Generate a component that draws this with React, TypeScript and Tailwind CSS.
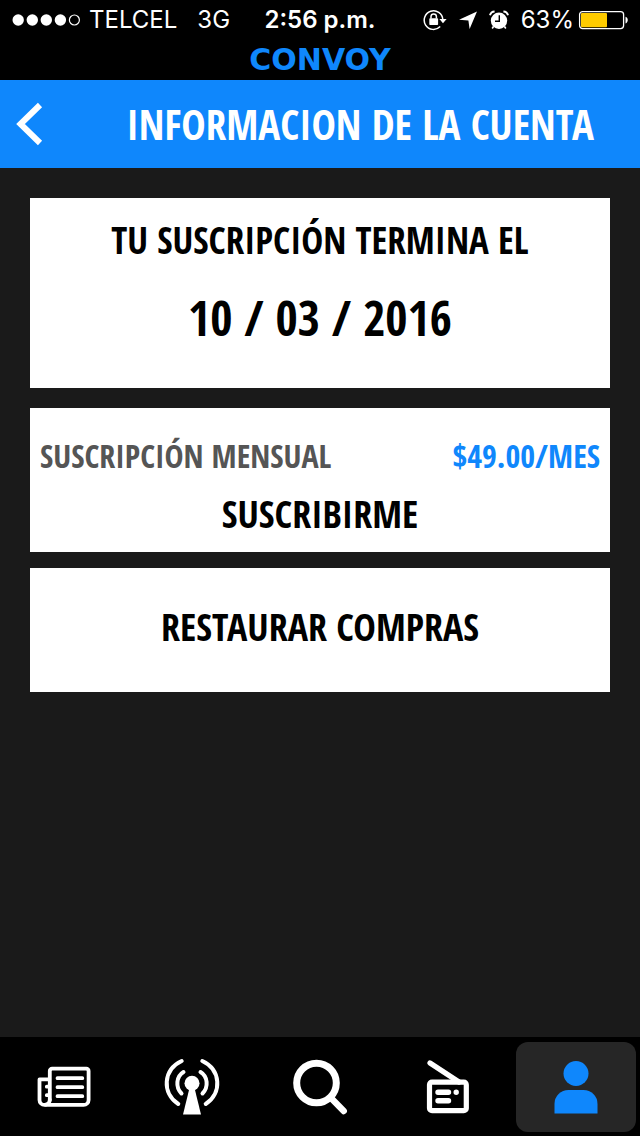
import type { ReactNode } from "react";

function StatusBar() {
  return (
    <div className="flex h-10 items-center justify-between px-3 font-['Inter',sans-serif] text-2xl font-normal text-white">
      <div className="flex flex-1 items-center gap-2">
        <svg width="69" height="14" viewBox="0 0 69 14" fill="currentColor" aria-hidden="true">
          <circle cx="6.2" cy="7" r="5.7" />
          <circle cx="20.3" cy="7" r="5.7" />
          <circle cx="34.3" cy="7" r="5.7" />
          <circle cx="48.4" cy="7" r="5.7" />
          <circle cx="62.4" cy="7" r="5" fill="none" stroke="currentColor" strokeWidth="1.2" />
        </svg>
        <span>TELCEL</span>
        <span className="ml-3">3G</span>
      </div>
      <span className="px-2 font-semibold">2:56 p.m.</span>
      <div className="flex flex-1 items-center justify-end">
        <svg width="24" height="22" viewBox="0 0 24 22" fill="none" stroke="currentColor" strokeWidth="1.5" aria-hidden="true">
          <path d="M17.2 17.600A9.300 9.300 0 1 1 19.800 10.500" />
          <path d="M16.400 10h7.200l-3.600 4.200z" fill="currentColor" stroke="none" />
          <rect x="6.300" y="9.300" width="8.800" height="6.700" rx="0.8" fill="currentColor" stroke="none" />
          <path d="M8 9.500V7.600a2.700 2.700 0 0 1 5.400 0V9.500" />
        </svg>
        <svg className="ml-3" width="18" height="18" viewBox="0 0 18 18" fill="currentColor" aria-hidden="true">
          <path d="M18 0.500 10.600 18 9.400 9.400 0 8.800z" />
        </svg>
        <svg className="ml-3" width="20" height="20" viewBox="0 0 20 20" fill="currentColor" aria-hidden="true">
          <circle cx="10" cy="10.800" r="8.200" />
          <path d="M1 5.200A5 5 0 0 1 5.600 1.400M14.400 1.400A5 5 0 0 1 19 5.200" fill="none" stroke="currentColor" strokeWidth="2" />
          <path d="M4.500 16.500 3.200 18.500M15.500 16.500l1.300 2" stroke="currentColor" strokeWidth="1.600" />
          <path d="M10.300 5.200v6.100H6" fill="none" stroke="#000" strokeWidth="1.400" />
        </svg>
        <span className="ml-3">63%</span>
        <svg className="ml-1 shrink-0" width="50" height="20" viewBox="0 0 50 20" aria-hidden="true">
          <rect x="1.600" y="1.600" width="44" height="17" rx="3" fill="none" stroke="#fff" strokeWidth="1.300" />
          <rect x="3" y="3" width="26" height="14.200" rx="1" fill="#ffcc00" />
          <path d="M47.500 6.700c3 .8 3 6 0 6.800z" fill="#fff" />
        </svg>
      </div>
    </div>
  );
}

const tabs: { label: string; active?: boolean; icon: ReactNode }[] = [
  {
    label: "Noticias",
    icon: (
      <g fill="none" stroke="currentColor" strokeWidth="3.800" strokeLinecap="round" strokeLinejoin="round">
        <path d="M14.800 42V13a2.300 2.300 0 0 1 2.300-2.300h34.200a2.300 2.300 0 0 1 2.300 2.300v28.900a5 5 0 0 1-5 5H9.500a5 5 0 0 1-5-5V21.400h10" />
        <path d="M14.800 42a5 5 0 0 1-4 4.600" />
        <path d="M22.500 20.200h24.800M22.500 29.200h24.800M22.500 38.200h24.800M11.800 28.700h2M11.800 37.200h2" />
      </g>
    ),
  },
  {
    label: "En vivo",
    icon: (
      <g>
        <circle cx="29" cy="25.200" r="7.500" fill="currentColor" />
        <path d="M26.500 30h5L38 56.500H20z" fill="currentColor" />
        <g fill="none" stroke="currentColor" strokeWidth="4" strokeLinecap="round">
          <path d="M18.700 3C.2 11.500-1.500 35 15.300 46M39.300 3C57.800 11.500 59.500 35 42.700 46" />
          <path d="M20.500 14c-7.300 4.500-8.300 15-2 21.500M37.500 14c7.300 4.500 8.300 15 2 21.500" />
        </g>
      </g>
    ),
  },
  {
    label: "Buscar",
    icon: (
      <g fill="none" stroke="currentColor" strokeLinecap="round">
        <circle cx="25.500" cy="25" r="19.800" strokeWidth="7" />
        <path d="M40 40 52.700 53" strokeWidth="6.500" />
      </g>
    ),
  },
  {
    label: "Radio",
    icon: (
      <g fill="none" stroke="currentColor" strokeLinecap="round" strokeLinejoin="round">
        <rect x="10.500" y="24.200" width="36.800" height="28.500" rx="2.500" strokeWidth="5.200" />
        <path d="M11 5 40 24" strokeWidth="5.200" />
        <path d="M19 34.200h10.500M19 42.800h10.500M37.200 34.200h.01" strokeWidth="5.400" />
      </g>
    ),
  },
  {
    label: "Cuenta",
    active: true,
    icon: (
      <g fill="currentColor">
        <circle cx="29" cy="15.500" r="12.500" />
        <path d="M7.500 55.500V46a14 14 0 0 1 14-14h15a14 14 0 0 1 14 14v9.500z" />
      </g>
    ),
  },
];

function TabBar() {
  return (
    <nav className="grid h-[99px] grid-cols-5 bg-black pb-1 pt-[5px]">
      {tabs.map((tab) => (
        <button
          key={tab.label}
          type="button"
          aria-label={tab.label}
          className={
            tab.active
              ? "mx-1 flex items-center justify-center rounded-xl bg-[#262626] text-[#0f87fc]"
              : "mx-1 flex items-center justify-center rounded-xl text-white"
          }
        >
          <svg width="58" height="58" viewBox="0 0 58 58" aria-hidden="true">
            {tab.icon}
          </svg>
        </button>
      ))}
    </nav>
  );
}

export default function App() {
  return (
    <div className="flex min-h-screen flex-col bg-[#1a1a1a] font-['Open_Sans_Condensed','Roboto_Condensed',sans-serif] font-bold text-black">
      <header>
        <div className="h-20 bg-black">
          <StatusBar />
          <div className="flex h-10 items-center justify-center font-['DejaVu_Sans',sans-serif] text-[30px] leading-10 text-[#0f87fc]">
            CONVOY
          </div>
        </div>
        <div className="flex h-22 items-center bg-[#0f87fc] px-4 text-white">
          <button type="button" aria-label="Volver">
            <svg width="28" height="44" viewBox="0 0 28 44" fill="none" stroke="currentColor" strokeWidth="6" aria-hidden="true">
              <path d="M24 3 4.500 22 24 41" />
            </svg>
          </button>
          <h1 className="flex-1 pr-[30px] text-right text-[41px] leading-none">INFORMACION DE LA CUENTA</h1>
        </div>
      </header>

      <main className="flex flex-1 flex-col px-[30px] pt-[30px]">
        <section className="mb-5 min-h-[190px] bg-white pt-4 text-center">
          <h2 className="text-[37px] leading-[52px]">TU SUSCRIPCIÓN TERMINA EL</h2>
          <p className="mt-4 text-5xl leading-[72px]">10 / 03 / 2016</p>
        </section>

        <section className="mb-4 min-h-36 bg-white px-[10px] pt-7">
          <div className="flex items-center justify-between text-[32px] leading-[40px]">
            <span className="text-[#555555]">SUSCRIPCIÓN MENSUAL</span>
            <span className="text-[#0f87fc]">$49.00/MES</span>
          </div>
          <button type="button" className="mt-3 block w-full text-center text-[38px] leading-[50px]">
            SUSCRIBIRME
          </button>
        </section>

        <button type="button" className="bg-white pb-10 pt-8 text-[38px] leading-[52px]">
          RESTAURAR COMPRAS
        </button>
      </main>

      <TabBar />
    </div>
  );
}
